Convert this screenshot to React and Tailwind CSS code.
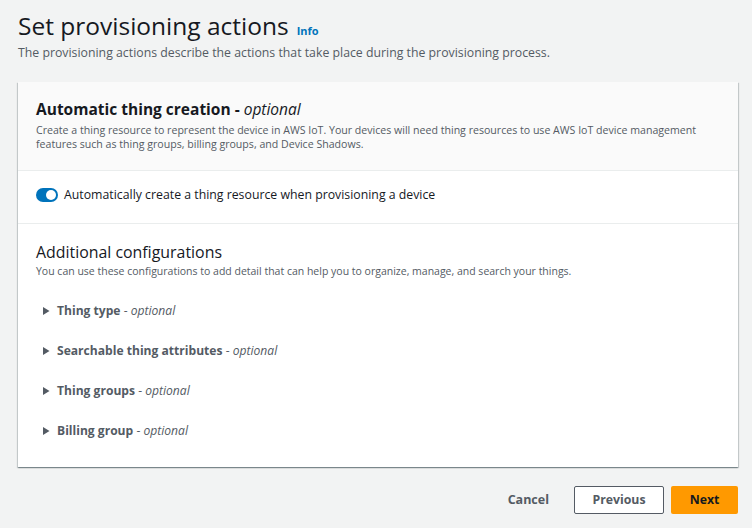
import React, { useState } from "react";

const font = { fontFamily: '"Open Sans", "Noto Sans", Arial, sans-serif' };

function Caret() {
  return (
    <svg width="10" height="10" viewBox="0 0 10 10" className="shrink-0">
      <path d="M2 1 L8.5 5 L2 9 Z" fill="#545b64" />
    </svg>
  );
}

function Expandable({ label }) {
  return (
    <div className="flex items-center gap-[6px] h-[40px] pl-[5px]">
      <Caret />
      <span className="text-[12.1px] text-[#545b64]">
        <span className="font-bold">{label}</span> -{" "}
        <span className="italic">optional</span>
      </span>
    </div>
  );
}

export default function App() {
  const [on, setOn] = useState(true);

  return (
    <div
      className="w-[752px] h-[528px] bg-[#f2f3f3] text-[#16191f] overflow-hidden"
      style={font}
    >
      <div className="pl-[18px] pr-[14px] pt-[9px]">
        <div className="flex items-baseline gap-[8px]">
          <h1 className="text-[24.5px] leading-[33px] font-normal">
            Set provisioning actions
          </h1>
          <a className="text-[11px] font-bold text-[#0073bb]">Info</a>
        </div>
        <p className="text-[12.3px] leading-[18px] text-[#545b64] mt-[2px]">
          The provisioning actions describe the actions that take place during
          the provisioning process.
        </p>

        <div className="mt-[20px] bg-white shadow-[0_1px_1px_0_rgba(0,28,36,0.3),1px_1px_1px_0_rgba(0,28,36,0.15),-1px_1px_1px_0_rgba(0,28,36,0.15)]">
          <div className="bg-[#fafafa] border-b border-[#eaeded] px-[18px] pt-[16px] pb-[19px]">
            <h2 className="text-[15.5px] leading-[22px] font-bold">
              Automatic thing creation - <span className="italic font-normal">optional</span>
            </h2>
            <p className="text-[10.6px] leading-[14px] text-[#545b64] mt-[3px]">
              Create a thing resource to represent the device in AWS IoT. Your
              devices will need thing resources to use AWS IoT device management
              features such as thing groups, billing groups, and Device Shadows.
            </p>
          </div>
          <div className="flex items-center gap-[6px] px-[18px] h-[53px] pb-[4px] border-b border-[#eaeded]">
            <button
              onClick={() => setOn(!on)}
              className={`relative w-[22px] h-[14px] rounded-full ${on ? "bg-[#0073bb]" : "bg-[#687078]"}`}
            >
              <span
                className={`absolute top-[2px] w-[10px] h-[10px] rounded-full bg-white ${on ? "left-[10px]" : "left-[2px]"}`}
              />
            </button>
            <span className="text-[12.3px]">
              Automatically create a thing resource when provisioning a device
            </span>
          </div>
          <div className="px-[18px] pt-[17px] pb-[16px]">
            <h2 className="text-[15.9px] leading-[22px] font-normal">
              Additional configurations
            </h2>
            <p className="text-[10.5px] leading-[14px] text-[#545b64] mt-[1px]">
              You can use these configurations to add detail that can help you to
              organize, manage, and search your things.
            </p>
            <div className="mt-[13px]">
              <Expandable label="Thing type" />
              <Expandable label="Searchable thing attributes" />
              <Expandable label="Thing groups" />
              <Expandable label="Billing group" />
            </div>
          </div>
        </div>

        <div className="flex justify-end items-center gap-[7px] mt-[19px]">
          <button className="text-[12.5px] font-bold text-[#545b64] px-[16px] h-[28px] mr-[2px]">
            Cancel
          </button>
          <button className="text-[12.3px] font-bold text-[#545b64] bg-white border border-[#545b64] rounded-[2px] w-[90px] h-[28px]">
            Previous
          </button>
          <button className="text-[12.3px] font-bold text-[#16191f] bg-[#ff9900] rounded-[2px] w-[67px] h-[28px]">
            Next
          </button>
        </div>
      </div>
    </div>
  );
}
